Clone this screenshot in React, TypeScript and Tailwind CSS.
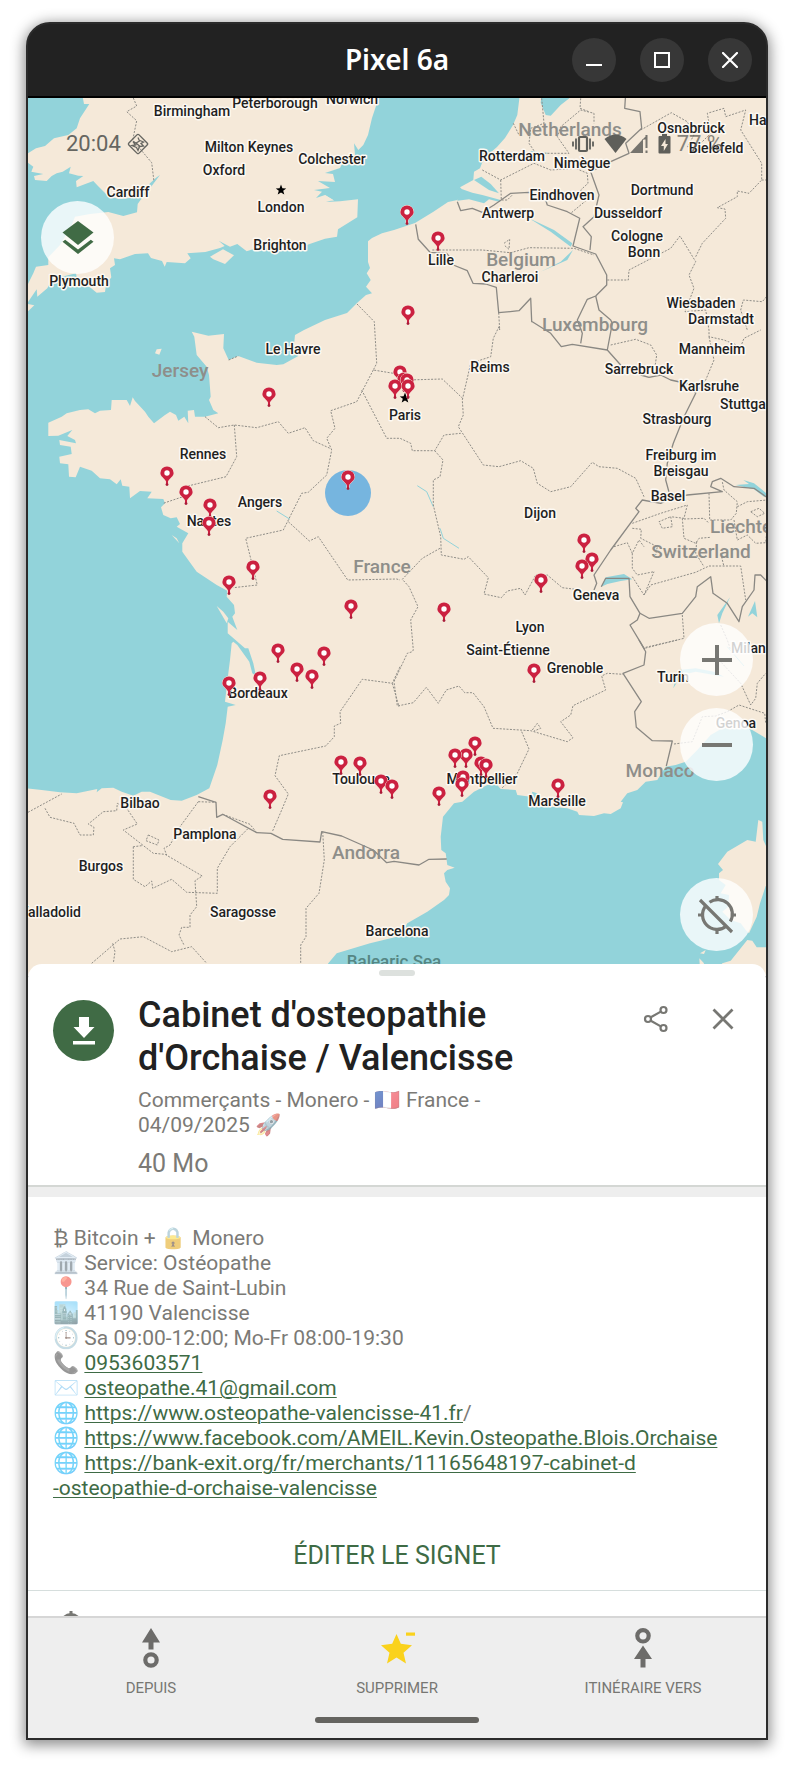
import React from "react";

/* ---------- Map geometry ---------- */

// The map is divided into survey tiles; points inside a tile are stored at 3x scale.
type Tile = "A" | "B" | "C" | "D" | "E" | "F";
const ORIGINS: Record<Tile, [number, number]> = {
  A: [0, 0],
  B: [394, 0],
  C: [0, 320],
  D: [394, 320],
  E: [0, 640],
  F: [394, 640],
};

// "B 1,2 3,4 D 5,6" -> list of points in map units; a letter switches the tile.
function pts(src: string): string {
  let tile: Tile = "A";
  const out: string[] = [];
  for (const token of src.trim().split(/\s+/)) {
    if (token.length === 1) {
      tile = token as Tile;
      continue;
    }
    const [x, y] = token.split(",").map(Number);
    const [ox, oy] = ORIGINS[tile];
    out.push(`${(ox + x / 3).toFixed(1)},${(oy + y / 3).toFixed(1)}`);
  }
  return out.join(" ");
}

const LAND = [
  // Great Britain
  "A 246,280 252,312 268,312 240,355 230,385 205,405 162,415 135,438 108,445 84,460 84,488 100,500 94,515 130,522 102,528 105,540 140,543 155,528 170,520 188,515 212,500 207,520 235,527 250,528 228,543 230,562 280,543 294,558 318,582 354,597 390,594 432,580 450,550 470,532 480,525 450,565 430,588 413,612 411,637 370,648 325,636 270,642 225,650 215,675 180,735 145,772 145,795 108,800 100,820 84,852 84,906 110,868 112,890 142,865 150,850 180,832 228,820 234,855 270,862 290,878 315,876 318,855 334,832 330,805 345,795 342,775 360,778 405,762 444,760 453,774 486,783 494,800 500,786 555,790 572,775 562,760 616,756 660,744 674,738 656,722 690,740 712,732 740,754 770,744 855,747 920,735 975,716 1011,710 1014,688 1072,652 1074,598 1020,604 978,606 1000,600 975,585 948,594 966,575 942,570 990,564 954,543 1005,546 999,522 975,519 1020,504 1032,480 1065,465 1062,430 1075,450 1090,435 1104,405 1116,354 1128,318 1128,280",
  "A 630,770 669,748 702,766 675,792 640,778",
  "A 84,912 103,916 84,934",
  "A 975,585 1003,602 978,600",
  // Channel Islands and small Atlantic islands
  "C 465,100 470,88 485,86 478,104",
  "C 515,645 530,655 538,670",
  "C 650,858 670,875 685,895 680,910",
  // Continent
  "B 378,280 370,345 357,375 333,414 309,441 288,459 264,489 258,505 240,515 238,540 198,562 216,580 190,600 162,606 117,636 63,669 0,690 A 1146,700 1116,714 1104,724 1104,786 1110,804 1100,820 1112,840 1098,860 1116,880 1098,885 1071,909 1041,939 975,960 912,990 C 885,45 882,75 895,108 850,133 830,135 770,128 715,108 686,120 670,85 672,42 625,47 575,35 583,50 590,105 620,140 627,165 632,230 627,240 640,270 655,280 615,290 585,290 582,270 563,272 565,310 553,290 535,302 528,285 510,275 495,285 462,310 445,290 435,275 405,243 398,232 390,258 380,240 363,240 335,240 333,270 300,272 285,280 265,268 240,270 200,280 185,290 145,308 145,348 175,347 217,330 202,348 225,360 228,370 178,360 180,375 212,380 215,402 178,410 180,430 205,433 207,470 227,472 240,440 275,452 300,475 330,478 350,493 362,478 367,497 388,500 390,535 420,513 455,515 442,535 490,537 495,550 483,562 490,585 512,595 530,592 540,612 530,620 565,640 547,670 547,695 590,755 650,795 682,812 680,830 702,855 705,880 697,890 712,930 683,905 683,940 735,985 E 745,25 760,70 768,108 757,100 748,65 712,15 700,5 695,10 690,60 683,115 675,185 707,195 683,200 677,250 668,300 652,375 628,445 590,465 545,482 512,480 450,455 425,455 400,467 365,455 340,443 305,445 290,457 292,447 230,460 180,457 125,450 70,444 70,1020 960,1020 985,970 1010,940 1110,910 1200,888 F 40,850 100,815 150,780 165,765 168,745 155,725 150,700 160,690 182,683 160,675 155,640 142,630 140,590 147,530 180,490 205,485 240,455 280,435 310,435 320,447 365,450 370,465 410,470 415,455 430,460 425,480 470,500 520,505 550,515 555,525 600,528 630,520 650,522 680,505 687,487 680,485 700,460 730,450 755,425 790,420 815,380 845,375 875,365 910,330 950,285 990,262 1040,258 1075,270 1130,303 B 1130,280",
  // Corsica
  "F 1093,540 1105,545 1108,600 1130,650 1130,735 1115,738 1098,790 1088,830 1065,880 1055,870 1040,850 1010,840 985,815 1003,800 1005,765 980,760 995,735 975,720 975,700 987,690 972,672 1000,635 1060,600 1085,605",
  // Sardinia
  "F 1060,900 1075,902 1088,922 1130,922 1130,1020 950,1020 985,970 1010,962",
  "F 918,940 935,930 930,942",
  "F 916,955 930,970 930,1010 918,985",
];

const WATER = [
  "B 443,280 545,280 500,315 470,347 455,345 440,308",
  "B 240,540 262,530 290,552 315,580 285,570",
  "B 205,568 235,578 265,585 320,600 318,606 285,598 270,610 225,598 190,602",
  "D 622,800 635,772 690,762 715,778 680,783 640,792",
  "D 1025,495 1065,492 1048,480 1080,490 1130,530 1110,530 1080,508",
  "D 970,885 1008,832 985,880 975,910",
  "D 1062,890 1083,843 1090,892 1075,880",
  "B 405,655 480,690 535,730 530,740 470,695",
  "B 440,815 500,785 537,750 520,780",
  "F 838,145 845,115 855,90 905,85 960,95 990,110 905,95 862,105",
];

const RIVERS = [
  "D 70,497 98,515 118,560",
  "D 138,625 148,655 195,685",
  "C 830,573 870,598",
  "B 410,455 460,460",
  "F 1000,20 1050,78",
];

const FRONTIERS = [
  "B 190,605 200,632 235,625 265,637 300,615 350,580 405,577 455,600 460,615 520,635 557,655 537,738 605,762 638,825 638,855 605,888 580,898 550,960 D 565,40 560,70",
  "B 65,673 73,718 108,757 158,760 175,780 178,795 220,812 237,850 275,852 307,862 314,938 375,932 410,895 413,965 D 415,5 470,40 502,80 535,73 640,90 655,10 B 650,960 615,930 605,888",
  "D 640,90 680,135 740,165 765,172 800,165 830,180 885,192 905,220 870,290 838,370 820,430 815,480 830,535 800,550 745,540 725,565 735,575 650,690 600,765 608,790 600,810",
  "D 622,800 635,775 705,775 708,830 738,880 730,900 708,915 752,988",
  "F 735,0 755,35 750,75 687,100 742,185 722,215 727,262 775,302 835,303 817,378",
  "B 695,280 692,325 738,335 743,385 695,430 705,460 650,485 590,515 615,585 600,650 567,680 592,710 588,750",
  "D 830,535 880,525 985,515 950,500 955,485 980,475 1020,500 1080,505 1130,540",
  "D 738,880 765,895 865,880 905,830 910,800 950,770 957,820 1000,850 1035,905 1045,860 1080,810 1083,765 1100,765 1130,795",
  "E 595,470 648,487 650,532 668,523 770,578 813,580 848,598 960,606 965,575 1025,588 1120,630 1160,668 1182,664 F 75,675 105,658 158,657",
];

const REGIONS = [
  // Britain
  "A 400,294 410,318 380,335 410,362 398,420 455,488 462,545",
  // Low Countries
  "B 443,295 450,370 410,385 405,430 425,460 525,460 490,410 500,380 560,330 600,340 600,370",
  "B 265,510 320,540 420,490 470,510 545,505 580,520 582,550 560,570 578,600 530,640",
  "B 320,540 322,600 340,600 355,585",
  "B 358,370 375,405",
  "B 560,295 558,325 585,335",
  "B 115,750 265,750 350,758 405,743 540,745 600,765",
  "B 330,730 347,718 345,748 330,735",
  "B 640,840 703,840 705,810 830,745 858,708 905,785 885,825 900,865 873,935 935,930 945,990 D 945,50 990,60 1040,80 1050,55 1100,30",
  "B 905,770 925,730 995,655 993,627 970,623 1030,590 1030,573 1065,580 1103,540 1103,490 1040,390 1055,330 995,350 990,325 940,340 950,400 920,430 880,440",
  "B 740,390 832,338 880,365 900,405 880,440",
  "B 1103,540 1130,540",
  "B 1130,875 1105,905 1048,900 1040,930 1060,990",
  "D 650,75 725,58 770,75 788,105 780,160",
  "D 945,50 960,120 935,180 905,220",
  // Northern France
  "A 1071,912 1123,965 C 1130,130 1120,150 1180,160",
  "C 1120,150 1070,245 992,272 1005,325 980,355 995,390 980,465 925,517 905,520 850,630 737,655 758,740 772,795 700,803",
  "C 1085,210 1160,355 1200,355 D 50,370 55,392 122,392 150,345 200,340",
  "C 615,290 655,323 703,315 770,323 835,305 865,340 915,323 940,362 990,385",
  "C 703,315 710,410 678,470 555,500",
  "C 555,528 490,550",
  "C 686,120 715,108",
  "B 314,938 317,990 D 315,20 298,55 290,110 230,130 205,240 208,285 193,320 268,435 315,440 380,422 418,445 430,490 470,515 530,500 595,427 615,440 670,445 725,475 750,530",
  "D 40,180 145,177 208,237",
  "D 122,392 147,420 138,470 118,480 118,555 140,650 142,705 210,718 223,710 283,773 270,822 322,833 340,813 380,805 393,825 425,765 460,765 505,803 545,808",
  "D 138,685 85,715 25,778 D 45,800 72,860 50,900 58,990 F 55,35 40,40 0,125 10,198 58,188 97,142 133,190 157,150 195,138 212,158 237,158 270,200 297,265 410,272 520,305 537,293 500,245 530,225 537,197 635,150 623,108 640,100 687,103",
  "C 865,605 928,663 955,650 1043,780 1190,777 1200,780",
  "F 383,275 405,327 370,400 323,445",
  "F 415,270 430,250 440,265 420,273",
  // South-west
  "E 1200,80 1177,130 1087,118 1020,215 1022,250 1003,258 1003,290 977,318 838,347 825,407 865,462 845,510 817,575",
  "E 1177,130 1197,200",
  // Spain
  "E 84,517 185,462",
  "E 135,505 150,532 222,550 240,585 280,585 282,562 265,552 310,515 350,512 352,490 380,505 412,552 370,570 460,640 495,643 607,708 585,722 590,800 570,825 570,862 545,862 537,885 552,915",
  "E 445,585 477,600 472,615 438,602 445,585",
  "E 400,620 400,718 435,740 455,723 458,745 515,718 560,757 652,760 652,685 690,620 745,565",
  "E 425,617 400,620",
  "E 595,485 540,560 510,615 492,625 500,645",
  "E 595,485 648,487",
  "E 668,523 750,553 770,578",
  "E 968,575 973,660 957,760 918,805 918,890 902,915 902,1000",
  "E 275,970 360,897 430,890 515,935 575,920 620,970",
  "E 338,910 345,935 340,970",
  // Switzerland and northern Italy
  "D 715,610 800,580 880,555 870,595 830,590 835,620 805,625 795,605 830,590",
  "D 865,595 870,655 905,670 915,655 950,652",
  "D 870,597 930,595 945,610",
  "D 945,520 947,600 1010,600 1027,580 1030,545 990,510 985,485",
  "D 1030,560 1060,545 1120,540",
  "D 1070,575 1095,565 1112,580 1090,590 1070,575",
  "D 715,625 742,628 740,655 790,680 785,705",
  "D 660,680 700,668 715,700 735,660 750,680",
  "D 715,700 715,745 730,765 780,755",
  "D 715,770 750,825 770,795 905,757 945,738 1040,738 1055,840",
  "D 750,825 780,755",
  "D 908,665 905,700 930,740",
  "D 1020,600 1030,660 1060,645 1085,670 1115,668 1120,620",
  "D 980,700 990,740",
  "D 865,885 870,955 752,985",
  "F 755,22 850,0",
  "F 840,312 895,305 925,230 965,228 1000,215 1035,195 1112,220 1115,250",
  "F 975,60 1040,130 1070,195 1085,175 1090,130 1115,100",
  "D 980,915 1000,960 F 1010,30",
];

type Anchor = "start" | "middle" | "end";
type Label = [string, number, number, Anchor?];

const CITIES: Label[] = [
  ["Birmingham", 192, 116],
  ["Peterborough", 275, 108],
  ["Norwich", 352, 104],
  ["Milton Keynes", 249, 152],
  ["Colchester", 332, 164],
  ["Oxford", 224, 175],
  ["Cardiff", 128, 197],
  ["London", 281, 212],
  ["Brighton", 280, 250],
  ["Plymouth", 79, 286],
  ["Osnabrück", 691, 133],
  ["Hanovre", 749, 125, "start"],
  ["Bielefeld", 716, 153],
  ["Rotterdam", 512, 161],
  ["Nimègue", 582, 168],
  ["Eindhoven", 562, 200],
  ["Dortmund", 662, 195],
  ["Antwerp", 508, 218],
  ["Dusseldorf", 628, 218],
  ["Cologne", 637, 241],
  ["Bonn", 644, 257],
  ["Lille", 441, 265],
  ["Charleroi", 510, 282],
  ["Wiesbaden", 701, 308],
  ["Darmstadt", 721, 324],
  ["Le Havre", 293, 354],
  ["Mannheim", 712, 354],
  ["Reims", 490, 372],
  ["Sarrebruck", 639, 374],
  ["Karlsruhe", 709, 391],
  ["Stuttgart", 720, 409, "start"],
  ["Paris", 405, 420],
  ["Strasbourg", 677, 424],
  ["Rennes", 203, 459],
  ["Freiburg im", 681, 460],
  ["Breisgau", 681, 476],
  ["Basel", 668, 501],
  ["Angers", 260, 507],
  ["Dijon", 540, 518],
  ["Nantes", 209, 526],
  ["Geneva", 596, 600],
  ["Lyon", 530, 632],
  ["Saint-Étienne", 508, 655],
  ["Milan", 731, 653, "start"],
  ["Grenoble", 575, 673],
  ["Turin", 673, 682],
  ["Bordeaux", 258, 698],
  ["Genoa", 736, 728],
  ["Toulouse", 361, 784],
  ["Montpellier", 482, 784],
  ["Marseille", 557, 806],
  ["Bilbao", 140, 808],
  ["Pamplona", 205, 839],
  ["Burgos", 101, 871],
  ["Valladolid", 81, 917, "end"],
  ["Saragosse", 243, 917],
  ["Barcelona", 397, 936],
];

const COUNTRIES: Label[] = [
  ["Netherlands", 570, 136],
  ["Belgium", 521, 266],
  ["Luxembourg", 595, 331],
  ["Jersey", 180, 377],
  ["Liechtenstein", 710, 533, "start"],
  ["Switzerland", 701, 558],
  ["France", 382, 573],
  ["Monaco", 660, 777],
  ["Andorra", 366, 859],
];

const PINS: [number, number][] = [
  [407, 212], [438, 238], [408, 312], [269, 394], [400, 372], [404, 379], [407, 380],
  [395, 386], [408, 386], [348, 477], [167, 473], [186, 492], [210, 505], [209, 523],
  [253, 567], [229, 582], [351, 606], [584, 540], [592, 559], [582, 566], [541, 580],
  [444, 609], [278, 650], [324, 653], [297, 669], [312, 676], [229, 683], [260, 678],
  [341, 762], [360, 763], [381, 781], [392, 786], [270, 796], [534, 670], [475, 743],
  [466, 755], [455, 755], [481, 763], [486, 765], [463, 777], [462, 784], [439, 793],
  [558, 785],
];

function Star({ x, y }: { x: number; y: number }) {
  return (
    <path
      transform={`translate(${x} ${y})`}
      d="M0-5.5 1.4-1.7 5.2-1.6 2.2.8 3.3 4.6 0 2.4-3.3 4.6-2.2.8-5.2-1.6-1.4-1.7Z"
      fill="#000"
    />
  );
}

function MapCanvas() {
  return (
    <svg
      className="block h-full w-full font-[Roboto,sans-serif]"
      viewBox="28 98 738 878"
      preserveAspectRatio="xMidYMin slice"
      role="img"
      aria-label="Carte"
    >
      <rect x="-400" y="98" width="1600" height="878" fill="#92d3da" />
      <g fill="#f5e9d9">
        {LAND.map((d, i) => (
          <polygon key={i} points={pts(d)} />
        ))}
      </g>
      <g fill="#92d3da">
        {WATER.map((d, i) => (
          <polygon key={i} points={pts(d)} />
        ))}
      </g>
      <g fill="none" stroke="#92d3da" strokeWidth="1">
        {RIVERS.map((d, i) => (
          <polyline key={i} points={pts(d)} />
        ))}
      </g>
      <g fill="none" stroke="#8f8d87" strokeWidth="1" strokeDasharray="2 1.4">
        {REGIONS.map((d, i) => (
          <polyline key={i} points={pts(d)} />
        ))}
      </g>
      <g fill="none" stroke="#8a8883" strokeWidth="1.3" strokeLinejoin="round">
        {FRONTIERS.map((d, i) => (
          <polyline key={i} points={pts(d)} />
        ))}
      </g>
      <g className="text-[19px] font-medium" fill="#8e8e8a">
        {COUNTRIES.map(([t, x, y, a]) => (
          <text key={t} x={x} y={y} textAnchor={a ?? "middle"}>
            {t}
          </text>
        ))}
      </g>
      <text className="text-[17px] font-medium" x="394" y="967" textAnchor="middle" fill="#558683">
        Balearic Sea
      </text>
      <g
        className="text-[14px] font-medium"
        fill="#1f1f1f"
        stroke="#fdf9f3"
        strokeWidth="3"
        strokeLinejoin="round"
        paintOrder="stroke"
      >
        {CITIES.map(([t, x, y, a]) => (
          <text key={t} x={x} y={y} textAnchor={a ?? "middle"}>
            {t}
          </text>
        ))}
      </g>
      <Star x={281} y={190} />
      <Star x={405} y={398} />
      <circle cx="348" cy="493" r="23" fill="#76b5df" />
      {PINS.map(([x, y], i) => (
        <g key={i} transform={`translate(${x} ${y})`}>
          <path
            d="M0-6.6A6.6 6.6 0 0 1 6.6 0C6.6 3.2 3 5 1 8.2L1 11.8H-1L-1 8.2C-3 5-6.6 3.2-6.6 0A6.6 6.6 0 0 1 0-6.6Z"
            fill="#cb2140"
            stroke="#f6dfd6"
            strokeWidth="1"
            paintOrder="stroke"
          />
          <circle r="2.7" fill="#fff" />
          <circle cy="11.6" r="1.4" fill="#a81c38" />
        </g>
      ))}
    </svg>
  );
}

/* ---------- Status bar ---------- */

function StatusBar() {
  return (
    <div className="absolute inset-x-0 top-[34px] flex h-6 items-center justify-between pr-[43px] pl-[38px] font-[Roboto,sans-serif] text-[22px] leading-6 text-[#666661]">
      <div className="flex items-center gap-1.5">
        <span>20:04</span>
        <svg className="h-[22px] w-[22px]" viewBox="0 0 22 22" fill="none" stroke="currentColor">
          <rect x="3.8" y="3.8" width="14.4" height="14.4" rx="1.5" strokeWidth="1.4" transform="rotate(45 11 11)" />
          <path d="M11 4.5 12.5 8 9 10 6 8.5 8.5 12 5 12.5 9.5 14.5 11 17.5 12.5 13.5 16.5 13 14 10.5 16.5 9 13 7.5M9 10 13 13.5" strokeWidth="1.3" />
        </svg>
      </div>
      <div className="flex items-center text-[#5f5f5a]">
        <svg className="mr-2.5 h-5 w-[22px]" viewBox="0 0 22 20" fill="none" stroke="currentColor" strokeWidth="2.2">
          <rect x="7" y="3" width="8" height="14" rx="1" />
          <path d="M4 4.5v11M18 4.5v11M1 7.5v5M21 7.5v5" strokeWidth="1.8" />
        </svg>
        <svg className="mr-[3px] h-5 w-[23px]" viewBox="0 0 23 20" fill="currentColor">
          <path d="M.5 5Q11.500-4 22.500 5L11.500 19Z" />
        </svg>
        <svg className="mr-2.5 h-5 w-[18px]" viewBox="0 0 18 20" fill="currentColor">
          <path d="M0 19 13 5V19Z" opacity=".85" />
          <path d="M15.500 1H17.500V14H15.500ZM15.500 16.500H17.500V19H15.500ZM17 1V5L12 6Z" opacity=".85" />
        </svg>
        <svg className="mr-1.5 h-5 w-[13px]" viewBox="0 0 13 20">
          <path d="M4 0H9V2H11.500Q12.500 2 12.500 3V18.500Q12.500 19.500 11.500 19.500H1.500Q.5 19.500.5 18.500V3Q.5 2 1.500 2H4Z" fill="currentColor" />
          <path d="M7.500 5 3 12H5.800V17L10 10H7.500Z" fill="#f5e9d9" />
        </svg>
        <span className="opacity-75">77 %</span>
      </div>
    </div>
  );
}

/* ---------- Window chrome ---------- */

const chromeButton =
  "flex h-11 w-11 items-center justify-center rounded-full bg-[#373737] text-white";

function TitleBar() {
  return (
    <header className="grid h-[74px] grid-cols-[1fr_auto_1fr] items-center rounded-t-[22px] border-b-2 border-black bg-[#222222] px-3.5">
      <h1 className="col-start-2 pb-0.5 font-['Noto_Sans',sans-serif] text-[28px] leading-10 font-semibold text-white">
        Pixel 6a
      </h1>
      <div className="flex justify-end gap-6">
        <button type="button" aria-label="Réduire" className={chromeButton}>
          <svg className="h-4 w-4" viewBox="0 0 16 16">
            <path d="M0 12H16V14H0Z" fill="currentColor" />
          </svg>
        </button>
        <button type="button" aria-label="Agrandir" className={chromeButton}>
          <svg className="h-4 w-4" viewBox="0 0 16 16">
            <rect x="1" y="1" width="14" height="14" fill="none" stroke="currentColor" strokeWidth="2" />
          </svg>
        </button>
        <button type="button" aria-label="Fermer" className={chromeButton}>
          <svg className="h-4 w-4" viewBox="0 0 16 16">
            <path d="M1 1 15 15M15 1 1 15" fill="none" stroke="currentColor" strokeWidth="2.200" strokeLinecap="round" />
          </svg>
        </button>
      </div>
    </header>
  );
}

/* ---------- Map controls ---------- */

const mapButton =
  "flex h-[73px] w-[73px] items-center justify-center rounded-full bg-white/80 text-[#777773]";

function MapControls() {
  return (
    <>
      <button type="button" aria-label="Calques" className={`${mapButton} absolute top-[103px] left-[13px]`}>
        <svg className="h-9 w-8" viewBox="0 0 32 36" fill="#406b45">
          <path d="M16 1 31.500 12.500 16 25 .5 12.500Z" />
          <path d="M3.200 19.800 16 29.500 28.800 19.800 31.500 21.800 16 34 .5 21.800Z" />
        </svg>
      </button>
      <div className="absolute top-[525px] right-[13px] flex flex-col gap-3">
        <button type="button" aria-label="Zoom avant" className={mapButton}>
          <svg className="h-[30px] w-[30px]" viewBox="0 0 30 30" fill="currentColor">
            <path d="M13 0H17V13H30V17H17V30H13V17H0V13H13Z" />
          </svg>
        </button>
        <button type="button" aria-label="Zoom arrière" className={mapButton}>
          <svg className="h-[30px] w-[30px]" viewBox="0 0 30 30" fill="currentColor">
            <path d="M0 13H30V17H0Z" />
          </svg>
        </button>
      </div>
      <button type="button" aria-label="Ma position" className={`${mapButton} absolute top-[780px] right-[13px]`}>
        <svg className="h-10 w-10" viewBox="0 0 40 40" fill="none" stroke="currentColor" strokeWidth="3.200">
          <path d="M12.500 7.200A14.500 14.500 0 0 1 33.300 26.500M29.200 31.200A14.500 14.500 0 0 1 8.800 10.800" />
          <path d="M20 1V6M20 34V39M1 20H6M34 20H39M3 5 35 37" />
        </svg>
      </button>
    </>
  );
}

/* ---------- Place sheet ---------- */

function Emoji({ children }: { children: string }) {
  return (
    <span className="font-['Noto_Color_Emoji',sans-serif] opacity-55" aria-hidden="true">
      {children}
    </span>
  );
}

const link = "text-[#3e6b45] underline decoration-1 underline-offset-2";

function SheetHeader() {
  return (
    <div className="relative flex items-start rounded-t-[14px] bg-white px-[25px] pt-[30px] pb-[7px]">
      <div className="absolute top-1.5 left-1/2 h-1.5 w-9 -translate-x-1/2 rounded-full bg-[#dde1de]" />
      <button
        type="button"
        aria-label="Télécharger"
        className="mt-1.5 flex h-[61px] w-[61px] shrink-0 items-center justify-center rounded-full bg-[#406b45]"
      >
        <svg className="h-7 w-[22px]" viewBox="0 0 22 28" fill="#fff">
          <path d="M6 0H16V10H21.500L11 21 .5 10H6ZM0 24H22V27.500H0Z" />
        </svg>
      </button>
      <div className="ml-6 min-w-0 flex-1">
        <h2 className="max-w-[400px] text-[36px] leading-[43px] font-medium text-[#212121]">
          Cabinet d'osteopathie d'Orchaise / Valencisse
        </h2>
        <p className="mt-2 text-[21px] leading-[25px]">
          Commerçants - Monero - <Emoji>🇫🇷</Emoji> France -<br />
          04/09/2025 <Emoji>🚀</Emoji>
        </p>
        <p className="mt-3 text-[25px] leading-7">40 Mo</p>
      </div>
      <div className="mt-2.5 flex items-center gap-[43px] pr-[7px] text-[#777773]">
        <button type="button" aria-label="Partager">
          <svg className="h-[30px] w-[26px]" viewBox="0 0 26 30" fill="none" stroke="currentColor" strokeWidth="2.200">
            <circle cx="5" cy="15" r="3" />
            <circle cx="20.500" cy="6" r="3" />
            <circle cx="20.500" cy="24" r="3" />
            <path d="M7.800 13.300 17.800 7.600M7.800 16.700 17.800 22.400" />
          </svg>
        </button>
        <button type="button" aria-label="Fermer la fiche">
          <svg className="h-[22px] w-[22px]" viewBox="0 0 22 22" fill="none" stroke="currentColor" strokeWidth="2.800">
            <path d="M1.500 1.500 20.500 20.500M20.500 1.500 1.500 20.500" />
          </svg>
        </button>
      </div>
    </div>
  );
}

function SheetBody() {
  return (
    <div className="bg-white">
      <div className="h-3 border-t-2 border-[#d4d7d4] bg-[#eeeeee]" />
      <div className="px-[25px] pt-[29px] text-[21px] leading-[25px]">
        <p>
          ₿ Bitcoin + <Emoji>🔒</Emoji> Monero
        </p>
        <p>
          <Emoji>🏛️</Emoji> Service: Ostéopathe
        </p>
        <p>
          <Emoji>📍</Emoji> 34 Rue de Saint-Lubin
        </p>
        <p>
          <Emoji>🏙️</Emoji> 41190 Valencisse
        </p>
        <p>
          <Emoji>🕒</Emoji> Sa 09:00-12:00; Mo-Fr 08:00-19:30
        </p>
        <p>
          <Emoji>📞</Emoji>{" "}
          <a className={link} href="tel:0953603571">
            0953603571
          </a>
        </p>
        <p>
          <Emoji>✉️</Emoji>{" "}
          <a className={link} href="mailto:osteopathe.41@gmail.com">
            osteopathe.41@gmail.com
          </a>
        </p>
        <p>
          <Emoji>🌐</Emoji>{" "}
          <a className={link} href="https://www.osteopathe-valencisse-41.fr">
            https://www.osteopathe-valencisse-41.fr
          </a>
          /
        </p>
        <p>
          <Emoji>🌐</Emoji>{" "}
          <a className={link} href="https://www.facebook.com/AMEIL.Kevin.Osteopathe.Blois.Orchaise">
            https://www.facebook.com/AMEIL.Kevin.Osteopathe.Blois.Orchaise
          </a>
        </p>
        <p>
          <Emoji>🌐</Emoji>{" "}
          <a
            className={link}
            href="https://bank-exit.org/fr/merchants/11165648197-cabinet-d-osteopathie-d-orchaise-valencisse"
          >
            https://bank-exit.org/fr/merchants/11165648197-cabinet-d
            <br />
            -osteopathie-d-orchaise-valencisse
          </a>
        </p>
      </div>
      <button
        type="button"
        className="mt-5 block h-[69px] w-full text-center text-[25px] leading-7 text-[#3e6b45]"
      >
        ÉDITER LE SIGNET
      </button>
      <div className="h-[26px] overflow-hidden border-t border-[#d6dedd] pt-5 pl-[35px]">
        <svg className="h-4 w-4" viewBox="0 0 16 16" fill="none" stroke="#777773" strokeWidth="3">
          <path d="M8 0V3" />
          <circle cx="8" cy="13" r="9.500" />
        </svg>
      </div>
    </div>
  );
}

/* ---------- Bottom navigation ---------- */

function BottomNav() {
  const item = "flex flex-col items-center gap-2.5 text-[15px] leading-5 text-[#777773]";
  return (
    <nav className="border-t-2 border-[#d6d6d6] bg-[#eeeeee] pt-2.5 pb-[15px]">
      <div className="grid grid-cols-3">
        <button type="button" className={item}>
          <svg className="h-10 w-6" viewBox="0 0 24 40" fill="#6d6c6a">
            <path d="M12 0 21 14.500H14.500V21.500H9.500V14.500H3Z" />
            <circle cx="12" cy="32" r="5.700" fill="none" stroke="#6d6c6a" strokeWidth="4.200" />
          </svg>
          DEPUIS
        </button>
        <button type="button" className={item}>
          <svg className="h-10 w-10" viewBox="0 0 40 40" fill="#fad21c">
            <path d="M19.500 6 23.800 15.800 35 17.300 26.500 24.800 29 35.500 19.500 29.600 10 35.500 12.500 24.800 4 17.300 15.200 15.800Z" />
            <path d="M29 4.500H38V7.700H29Z" />
          </svg>
          SUPPRIMER
        </button>
        <button type="button" className={item}>
          <svg className="h-10 w-6" viewBox="0 0 24 40" fill="#6d6c6a">
            <circle cx="12" cy="7.800" r="5.700" fill="none" stroke="#6d6c6a" strokeWidth="4.200" />
            <path d="M12 17.500 21 31H14.500V39.500H9.500V31H3Z" />
          </svg>
          ITINÉRAIRE VERS
        </button>
      </div>
      <div className="mx-auto mt-[19px] h-1.5 w-[164px] rounded-full bg-[#64635f]" />
    </nav>
  );
}

export default function App() {
  return (
    <div className="min-h-screen bg-white px-[26px] pt-[22px] pb-8">
      <main className="rounded-t-[24px] border-2 border-[#2b2b2b] bg-[#2b2b2b] font-[Roboto,sans-serif] text-[#7b7a76] shadow-[0_3px_14px_2px_rgba(0,0,0,0.45)]">
        <TitleBar />
        <section className="relative h-[878px] overflow-hidden">
          <MapCanvas />
          <StatusBar />
          <MapControls />
        </section>
        <section className="relative -mt-3">
          <SheetHeader />
          <SheetBody />
        </section>
        <BottomNav />
      </main>
    </div>
  );
}
